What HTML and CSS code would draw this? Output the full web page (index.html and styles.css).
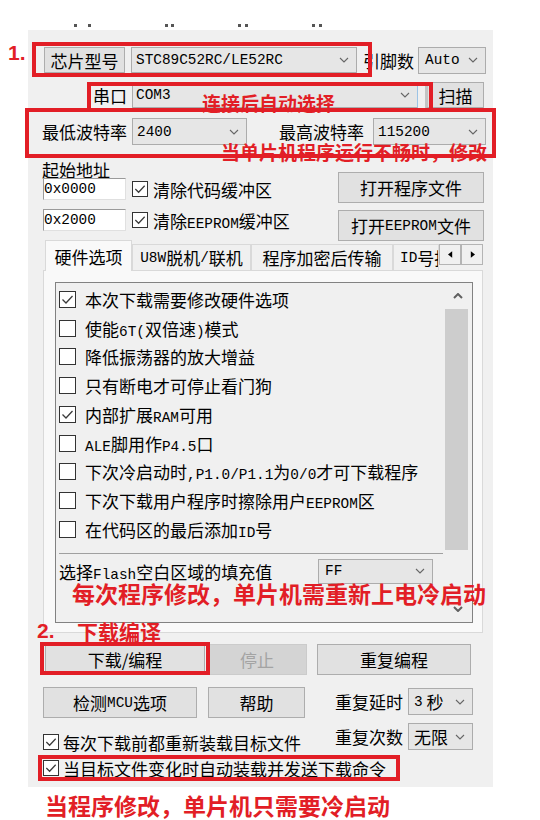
FILE: index.html
```html
<!DOCTYPE html>
<html lang="zh-CN">
<head>
    <meta charset="UTF-8">
    <meta name="viewport" content="width=540, initial-scale=1.0">
    <title>STC-ISP 下载设置</title>
    <link rel="stylesheet" href="styles.css">
</head>
<body>
<div class="page">
    <div class="scrap"><i></i><i></i><i></i><i></i><i></i><i></i><i></i><i></i></div>

    <div class="window">
        <!-- chip / pins -->
        <div class="row row-chip">
            <div class="btn chip-btn">芯片型号</div>
            <div class="combo chip-combo"><span class="m">STC89C52RC/LE52RC</span><svg class="chev" viewBox="0 0 10 6"><path d="M1 1l4 4 4-4"/></svg></div>
            <span class="pins-lbl">引脚数</span>
            <div class="combo pins-combo"><span class="m">Auto</span><svg class="chev" viewBox="0 0 10 6"><path d="M1 1l4 4 4-4"/></svg></div>
        </div>

        <!-- serial port -->
        <div class="row row-port">
            <span class="port-lbl">串口</span>
            <div class="combo port-combo"><span class="m">COM3</span><svg class="chev" viewBox="0 0 10 6"><path d="M1 1l4 4 4-4"/></svg></div>
            <div class="btn scan-btn">扫描</div>
        </div>

        <!-- baud rates -->
        <div class="row row-baud">
            <span class="baud-lbl">最低波特率</span>
            <div class="combo baud-min"><span class="m">2400</span><svg class="chev" viewBox="0 0 10 6"><path d="M1 1l4 4 4-4"/></svg></div>
            <span class="baud-lbl baud-lbl-max">最高波特率</span>
            <div class="combo baud-max"><span class="m">115200</span><svg class="chev" viewBox="0 0 10 6"><path d="M1 1l4 4 4-4"/></svg></div>
        </div>

        <!-- start address + file buttons -->
        <div class="addr">
            <div class="addr-left">
                <div class="addr-title">起始地址</div>
                <div class="addr-row">
                    <div class="field"><span class="m">0x0000</span></div>
                    <span class="cb"><svg viewBox="0 0 15 15"><path d="M2.5 7.5l3.5 3.5 6.5-7"/></svg></span>
                    <span class="cb-text">清除代码缓冲区</span>
                </div>
                <div class="addr-row addr-row2">
                    <div class="field"><span class="m">0x2000</span></div>
                    <span class="cb"><svg viewBox="0 0 15 15"><path d="M2.5 7.5l3.5 3.5 6.5-7"/></svg></span>
                    <span class="cb-text">清除<span class="m">EEPROM</span>缓冲区</span>
                </div>
            </div>
            <div class="addr-right">
                <div class="btn file-btn">打开程序文件</div>
                <div class="btn file-btn">打开<span class="m">EEPROM</span>文件</div>
            </div>
        </div>

        <!-- tabs -->
        <div class="tabs">
            <div class="tab active">硬件选项</div>
            <div class="tab tab2"><span class="m">U8W</span>脱机<span class="m">/</span>联机</div>
            <div class="tab tab3">程序加密后传输</div>
            <div class="tab tab4"><span class="m">ID</span>号指定</div>
            <div class="tab-arrows">
                <span class="arrow"><svg viewBox="0 0 6 8"><path d="M5 0v8L0 4z"/></svg></span>
                <span class="arrow"><svg viewBox="0 0 6 8"><path d="M1 0v8l5-4z"/></svg></span>
            </div>
        </div>
        <div class="tab-page">
            <div class="listbox">
                <div class="list">
                    <div class="item"><span class="cb"><svg viewBox="0 0 15 15"><path d="M2.5 7.5l3.5 3.5 6.5-7"/></svg></span><span class="item-text">本次下载需要修改硬件选项</span></div>
                    <div class="item"><span class="cb"></span><span class="item-text">使能<span class="m">6T(</span>双倍速<span class="m">)</span>模式</span></div>
                    <div class="item"><span class="cb"></span><span class="item-text">降低振荡器的放大增益</span></div>
                    <div class="item"><span class="cb"></span><span class="item-text">只有断电才可停止看门狗</span></div>
                    <div class="item"><span class="cb"><svg viewBox="0 0 15 15"><path d="M2.5 7.5l3.5 3.5 6.5-7"/></svg></span><span class="item-text">内部扩展<span class="m">RAM</span>可用</span></div>
                    <div class="item"><span class="cb"></span><span class="item-text"><span class="m">ALE</span>脚用作<span class="m">P4.5</span>口</span></div>
                    <div class="item"><span class="cb"></span><span class="item-text">下次冷启动时<span class="m">,P1.0/P1.1</span>为<span class="m">0/0</span>才可下载程序</span></div>
                    <div class="item"><span class="cb"></span><span class="item-text">下次下载用户程序时擦除用户<span class="m">EEPROM</span>区</span></div>
                    <div class="item"><span class="cb"></span><span class="item-text">在代码区的最后添加<span class="m">ID</span>号</span></div>
                    <div class="sep"></div>
                    <div class="flash-row">
                        <span>选择<span class="m">Flash</span>空白区域的填充值</span>
                        <div class="combo fill-combo"><span class="m">FF</span><svg class="chev" viewBox="0 0 10 6"><path d="M1 1l4 4 4-4"/></svg></div>
                    </div>
                </div>
                <div class="scrollbar">
                    <div class="sb-btn"><svg viewBox="0 0 10 6"><path d="M1 5l4-4 4 4"/></svg></div>
                    <div class="thumb"></div>
                    <div class="sb-btn sb-down"><svg viewBox="0 0 10 6"><path d="M1 1l4 4 4-4"/></svg></div>
                </div>
            </div>
        </div>

        <!-- download buttons -->
        <div class="row actions">
            <div class="btn dl-btn">下载/编程</div>
            <div class="btn stop-btn">停止</div>
            <div class="btn repeat-btn">重复编程</div>
        </div>

        <div class="lower">
            <div class="lower-left">
                <div class="row">
                    <div class="btn check-btn">检测<span class="m">MCU</span>选项</div>
                    <div class="btn help-btn">帮助</div>
                </div>
                <div class="opt">
                    <span class="cb cb-sm"><svg viewBox="0 0 15 15"><path d="M2.5 7.5l3.5 3.5 6.5-7"/></svg></span>
                    <span>每次下载前都重新装载目标文件</span>
                </div>
                <div class="opt opt2">
                    <span class="cb cb-sm"><svg viewBox="0 0 15 15"><path d="M2.5 7.5l3.5 3.5 6.5-7"/></svg></span>
                    <span>当目标文件变化时自动装载并发送下载命令</span>
                </div>
            </div>
            <div class="lower-right">
                <div class="row rep-row">
                    <span>重复延时</span>
                    <div class="combo rep-combo"><span class="m">3</span>&nbsp;秒<svg class="chev" viewBox="0 0 10 6"><path d="M1 1l4 4 4-4"/></svg></div>
                </div>
                <div class="row rep-row rep-row2">
                    <span>重复次数</span>
                    <div class="combo rep-combo">无限<svg class="chev" viewBox="0 0 10 6"><path d="M1 1l4 4 4-4"/></svg></div>
                </div>
            </div>
        </div>
    </div>

    <p class="note-bottom">当程序修改，单片机只需要冷启动</p>

    <!-- red annotations drawn over the window -->
    <span class="mark num1">1.</span>
    <div class="frame f-chip"></div>
    <div class="frame f-port"></div>
    <span class="mark note-port">连接后自动选择</span>
    <div class="frame f-baud"></div>
    <span class="mark note-baud">当单片机程序运行不畅时，修改</span>
    <span class="mark note-cold">每次程序修改，单片机需重新上电冷启动</span>
    <span class="mark num2">2.</span>
    <span class="mark note-dl">下载编译</span>
    <div class="frame f-dl"></div>
    <div class="frame f-auto"></div>
</div>
</body>
</html>
```

FILE: styles.css
```css
body {
    margin: 0;
    background: #fff;
    font-family: "Noto Sans CJK SC", sans-serif;
    font-size: 17px;
    color: #000;
}

.page {
    position: relative;
    width: 540px;
    height: 820px;
    overflow: hidden;
}

/* bits of a cut-off line above the window */
.scrap {
    height: 30px;
    box-sizing: border-box;
    padding: 24px 0 0 74px;
    display: flex;
    align-items: flex-start;
}

.scrap i {
    width: 3px;
    height: 3px;
    background: #555;
    margin-right: 11px;
}

.scrap i:nth-child(2) { margin-right: 74px; }
.scrap i:nth-child(3) { margin-right: 3px; }
.scrap i:nth-child(4) { margin-right: 64px; }
.scrap i:nth-child(5) { margin-right: 4px; }
.scrap i:nth-child(6) { margin-right: 64px; }
.scrap i:nth-child(7) { margin-right: 4px; }

.window {
    margin-left: 28px;
    width: 465px;
    height: 757px;
    background: #f0f0f0;
    overflow: hidden;
}

.m {
    font-family: "Liberation Mono", monospace;
    font-size: 14.4px;
}

.row {
    display: flex;
    align-items: center;
}

.btn {
    display: flex;
    align-items: center;
    justify-content: center;
    box-sizing: border-box;
    background: #e1e1e1;
    border: 1px solid #adadad;
    white-space: nowrap;
    flex: none;
}

.combo {
    display: flex;
    align-items: center;
    box-sizing: border-box;
    background: #e6e6e6;
    border: 1px solid #acacac;
    padding: 0 7px 0 4px;
    white-space: nowrap;
    flex: none;
}

.chev {
    width: 10px;
    height: 6px;
    margin-left: auto;
    fill: none;
    stroke: #666;
    stroke-width: 1.1;
}

.cb {
    width: 17px;
    height: 17px;
    box-sizing: border-box;
    border: 1px solid #333;
    background: #fff;
    flex: none;
}

.cb svg {
    display: block;
    width: 100%;
    height: 100%;
    fill: none;
    stroke: #3a3a3a;
    stroke-width: 1.3;
}

.cb-sm {
    width: 16px;
    height: 16px;
}

/* top rows */
.row-chip {
    margin-top: 17px;
    height: 26px;
}

.chip-btn {
    margin-left: 16px;
    width: 81px;
    height: 26px;
}

.chip-combo {
    margin-left: 6px;
    width: 226px;
    height: 26px;
}

.pins-lbl {
    margin-left: 6px;
}

.pins-combo {
    margin-left: 4px;
    width: 68px;
    height: 27px;
    padding-left: 6px;
}

.row-port {
    margin-top: 9px;
    height: 26px;
}

.port-lbl {
    margin-left: 65px;
}

.port-combo {
    margin-left: 5px;
    width: 286px;
    height: 26px;
    padding-left: 3px;
    border-right-color: #9cc3e5;
}

.scan-btn {
    margin-left: 7px;
    width: 59px;
    height: 26px;
    border-left: 3px solid #c4c4c4;
}

.row-baud {
    margin-top: 10px;
    height: 27px;
}

.baud-lbl {
    margin-left: 14px;
}

.baud-lbl-max {
    margin-left: 32px;
}

.baud-min {
    margin-left: 5px;
    width: 115px;
    height: 27px;
}

.baud-max {
    margin-left: 9px;
    width: 113px;
    height: 27px;
}

/* start address block */
.addr {
    margin-top: 16px;
    height: 79px;
    display: flex;
}

.addr-left {
    padding-left: 14px;
}

.addr-title {
    line-height: 17px;
}

.addr-row {
    display: flex;
    align-items: center;
    height: 22px;
}

.addr-row2 {
    margin-top: 9px;
}

.field {
    width: 83px;
    height: 22px;
    margin-left: 1px;
    box-sizing: border-box;
    background: #fff;
    border: 1px solid;
    border-color: #9a9a9a #e0e0e0 #e0e0e0 #9a9a9a;
    display: flex;
    align-items: center;
}

.addr-row .cb {
    margin-left: 6px;
    width: 16px;
    height: 16px;
}

.cb-text {
    margin-left: 5px;
    white-space: nowrap;
}

.addr-right {
    margin-left: auto;
    margin-right: 9px;
    padding-top: 11px;
}

.file-btn {
    width: 146px;
    height: 31px;
}

.file-btn + .file-btn {
    margin-top: 7px;
}

/* tab control */
.tabs {
    position: relative;
    z-index: 1;
    margin-left: 15px;
    width: 440px;
    height: 30px;
    display: flex;
    align-items: flex-end;
}

.tab {
    height: 26px;
    box-sizing: border-box;
    border: 1px solid #d9d9d9;
    border-bottom: none;
    background: #f0f0f0;
    display: flex;
    align-items: center;
    justify-content: center;
    white-space: nowrap;
    flex: none;
}

.tab.active {
    margin-left: 2px;
    width: 87px;
    height: 31px;
    margin-bottom: -1px;
    background: #f9f9f9;
}

.tab2 { width: 119px; }
.tab3 { width: 142px; }

.tab4 {
    width: 46px;
    overflow: hidden;
    justify-content: flex-start;
    padding-left: 6px;
}

.tab-arrows {
    align-self: flex-start;
    margin-top: 4px;
    display: flex;
    flex: none;
}

.arrow {
    width: 22px;
    height: 21px;
    box-sizing: border-box;
    border: 1px solid #b4b4b4;
    background: #f0f0f0;
    display: flex;
    align-items: center;
    justify-content: center;
}

.arrow svg {
    width: 5px;
    height: 7px;
    fill: #000;
}

.tab-page {
    margin-left: 15px;
    width: 440px;
    height: 363px;
    box-sizing: border-box;
    border: 1px solid #d9d9d9;
    background: #f9f9f9;
    padding: 11px 9px 9px 11px;
}

.listbox {
    height: 341px;
    box-sizing: border-box;
    border: 1px solid #828282;
    background: #f0f0f0;
    display: flex;
}

.list {
    flex: 1;
    padding: 2px 1px 0 3px;
}

.item {
    height: 28.75px;
    display: flex;
    align-items: center;
    white-space: nowrap;
}

.item-text {
    margin-left: 9px;
}

.sep {
    margin-top: 9px;
    height: 1px;
    background: #a0a0a0;
}

.flash-row {
    margin-top: 5px;
    height: 25px;
    display: flex;
    align-items: center;
    white-space: nowrap;
}

.fill-combo {
    margin-left: auto;
    margin-right: 10px;
    width: 115px;
    height: 25px;
    padding-left: 6px;
}

.scrollbar {
    width: 28px;
    flex: none;
    display: flex;
    flex-direction: column;
}

.sb-btn {
    height: 26px;
    display: flex;
    align-items: center;
    justify-content: center;
}

.sb-btn svg {
    width: 10px;
    height: 6px;
    fill: none;
    stroke: #606060;
    stroke-width: 2;
}

.sb-down {
    margin-top: auto;
}

.thumb {
    margin-left: 1px;
    width: 23px;
    height: 241px;
    background: #cdcdcd;
}

/* download area */
.actions {
    margin-top: 11px;
    height: 31px;
}

.dl-btn {
    margin-left: 17px;
    width: 160px;
    height: 31px;
}

.stop-btn {
    margin-left: 2px;
    width: 100px;
    height: 31px;
    background: #d4d4d4;
    border-color: #cbcbcb;
    color: #a3a3a3;
}

.repeat-btn {
    margin-left: 10px;
    width: 154px;
    height: 31px;
}

.lower {
    margin-top: 12px;
    display: flex;
}

.lower-left {
    margin-left: 15px;
    width: 262px;
    flex: none;
}

.check-btn {
    width: 154px;
    height: 31px;
}

.help-btn {
    margin-left: 11px;
    width: 97px;
    height: 31px;
}

.opt {
    margin-top: 14px;
    height: 20px;
    display: flex;
    align-items: center;
    gap: 4px;
    white-space: nowrap;
}

.opt2 {
    margin-top: 6px;
}

.lower-right {
    margin-left: 30px;
}

.rep-row {
    margin-top: 1px;
    height: 27px;
}

.rep-row2 {
    margin-top: 8px;
}

.rep-combo {
    margin-left: 5px;
    width: 65px;
    height: 27px;
    padding-left: 5px;
}

.note-bottom {
    margin: 7px 0 0 45px;
    font-size: 23px;
    line-height: 23px;
    font-weight: bold;
    color: #e21e26;
    white-space: nowrap;
}

/* red annotations */
.mark {
    position: absolute;
    color: #e21e26;
    font-weight: bold;
    line-height: 1;
    white-space: nowrap;
}

.num1, .num2 {
    font-family: "Liberation Sans", sans-serif;
    font-size: 21px;
}

.num1 { left: 8px; top: 42px; }
.num2 { left: 37px; top: 620px; }

.note-port { left: 202px; top: 93px; font-size: 19px; }
.note-baud { left: 221px; top: 142px; font-size: 19px; }
.note-cold { left: 72px; top: 582px; font-size: 23px; }
.note-dl { left: 77px; top: 621px; font-size: 21px; }

.frame {
    position: absolute;
    box-sizing: border-box;
    border: 4px solid #e21e26;
}

.f-chip { left: 32px; top: 42px; width: 340px; height: 35px; }
.f-port { left: 87px; top: 82px; width: 346px; height: 30px; }
.f-baud { left: 25px; top: 108px; width: 471px; height: 50px; }
.f-dl { left: 40px; top: 642px; width: 170px; height: 33px; }
.f-auto { left: 38px; top: 755px; width: 362px; height: 26px; }
```
